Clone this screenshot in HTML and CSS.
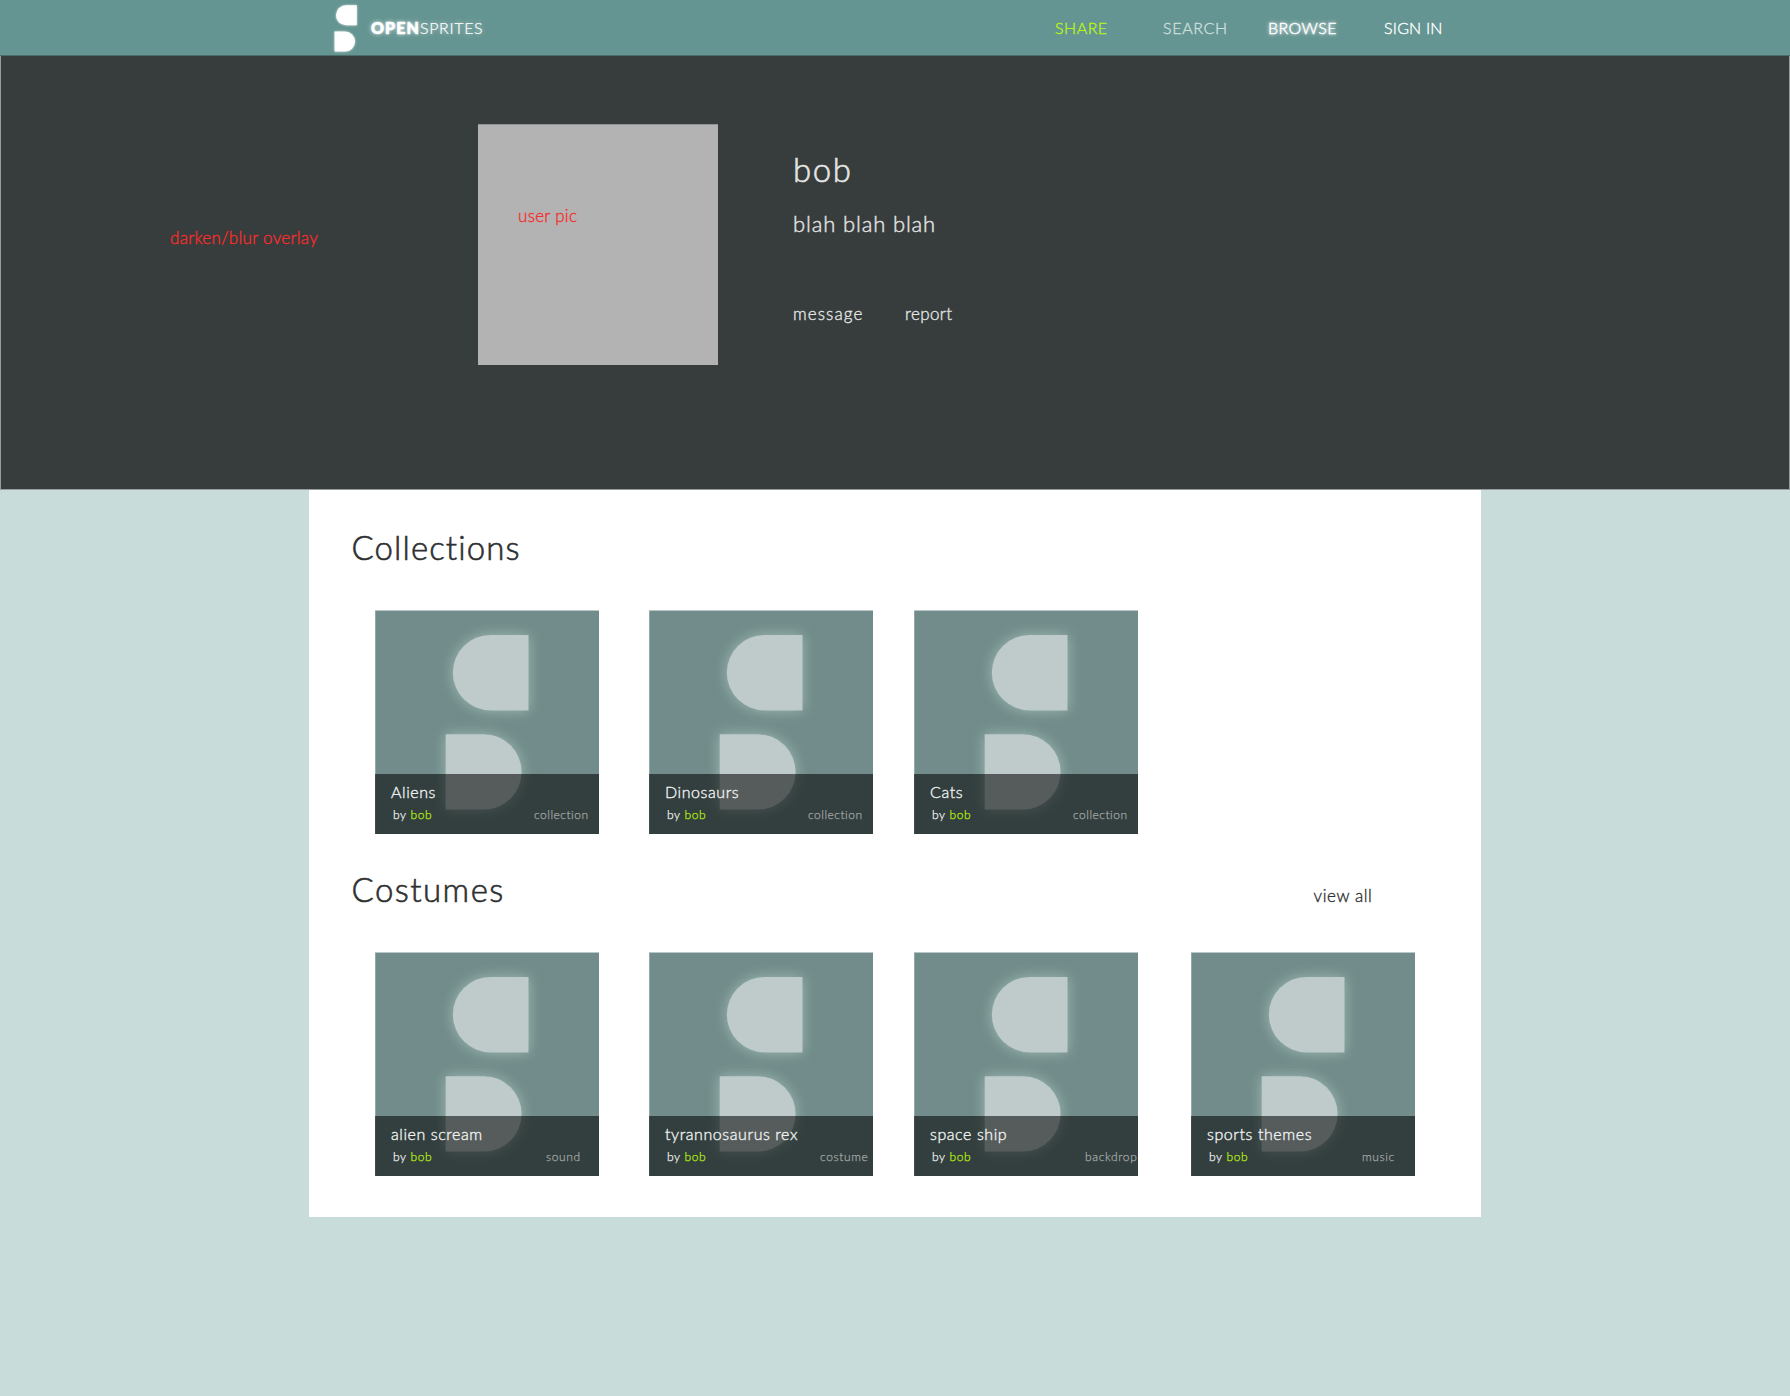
FILE: index.html
```html
<!DOCTYPE html>
<html lang="en">
<head>
<meta charset="utf-8">
<title>OpenSprites - bob</title>
<link rel="stylesheet" href="styles.css">
</head>
<body>
<svg width="0" height="0" class="defs" aria-hidden="true">
  <symbol id="mark" viewBox="0 0 224 224">
    <path d="M153.5 25H115.5a37.7 37.7 0 0 0 0 75.4H153.5z"/>
    <path d="M70.7 124.2H108.9a37.7 37.7 0 0 1 0 75.4H70.7z"/>
  </symbol>
</svg>
<header class="topbar">
  <a class="brand">
    <svg class="brand-mark" viewBox="0 0 24 48"><path d="M22.8 1.2H12a10 10 0 0 0 0 20H22.8z"/><path d="M.6 27.6H11a10 10 0 0 1 0 20H.6z"/></svg>
    <span class="brand-name"><b class="brand-open">OPEN</b>SPRITES</span>
  </a>
  <nav class="nav">
    <a class="nav-share">SHARE</a>
    <a class="nav-search">SEARCH</a>
    <a class="nav-browse">BROWSE</a>
    <a class="nav-signin">SIGN IN</a>
  </nav>
</header>
<section class="hero">
  <p class="note hero-note">darken/blur overlay</p>
  <div class="userpic"><p class="note">user pic</p></div>
  <div class="info">
    <h1 class="name">bob</h1>
    <p class="bio">blah blah blah</p>
    <p class="actions"><a class="message">message</a><a class="report">report</a></p>
  </div>
</section>
<main class="content">
  <div class="section-head"><h2 class="heading">Collections</h2></div>
  <div class="cards collections">
    <article class="card"><svg class="art" viewBox="0 0 224 224"><use href="#mark"/></svg><div class="caption"><h3 class="title">Aliens</h3><div class="meta"><span class="by">by <a class="author">bob</a></span><span class="kind">collection</span></div></div></article>
    <article class="card"><svg class="art" viewBox="0 0 224 224"><use href="#mark"/></svg><div class="caption"><h3 class="title">Dinosaurs</h3><div class="meta"><span class="by">by <a class="author">bob</a></span><span class="kind">collection</span></div></div></article>
    <article class="card"><svg class="art" viewBox="0 0 224 224"><use href="#mark"/></svg><div class="caption"><h3 class="title">Cats</h3><div class="meta"><span class="by">by <a class="author">bob</a></span><span class="kind">collection</span></div></div></article>
  </div>
  <div class="section-head"><h2 class="heading costumes">Costumes</h2><a class="view-all">view all</a></div>
  <div class="cards">
    <article class="card"><svg class="art" viewBox="0 0 224 224"><use href="#mark"/></svg><div class="caption"><h3 class="title">alien scream</h3><div class="meta"><span class="by">by <a class="author">bob</a></span><span class="kind">sound</span></div></div></article>
    <article class="card"><svg class="art" viewBox="0 0 224 224"><use href="#mark"/></svg><div class="caption"><h3 class="title">tyrannosaurus rex</h3><div class="meta"><span class="by">by <a class="author">bob</a></span><span class="kind">costume</span></div></div></article>
    <article class="card"><svg class="art" viewBox="0 0 224 224"><use href="#mark"/></svg><div class="caption"><h3 class="title">space ship</h3><div class="meta"><span class="by">by <a class="author">bob</a></span><span class="kind">backdrop</span></div></div></article>
    <article class="card"><svg class="art" viewBox="0 0 224 224"><use href="#mark"/></svg><div class="caption"><h3 class="title">sports themes</h3><div class="meta"><span class="by">by <a class="author">bob</a></span><span class="kind">music</span></div></div></article>
  </div>
</main>
</body>
</html>
```
FILE: styles.css
```css
* { box-sizing: border-box; margin: 0; padding: 0; }
body {
  min-height: 1396px;
  background: #c8dcda;
  color: #2e3031;
  font: 300 16px/20px Lato, "Open Sans", sans-serif;
  -webkit-text-stroke: .35px currentColor;
  white-space: nowrap;
}
h1, h2, h3 { font-weight: 300; }
.defs { display: block; }

/* Top bar */
.topbar {
  display: flex;
  align-items: center;
  height: 56px;
  padding-left: 334px;
  background: #659592;
  border-bottom: 1px solid #4c6c6a;
  color: #fff;
}
.brand { display: flex; align-items: center; gap: 13px; width: 721px; }
.brand-mark {
  width: 24px;
  height: 48px;
  margin-top: 1px;
  fill: #fff;
  overflow: visible;
  filter: drop-shadow(0 0 1px rgba(255, 255, 255, .8));
}
.brand-name { letter-spacing: .65px; text-shadow: 0 0 4px rgba(255, 255, 255, .7); -webkit-text-stroke-width: .2px; }
.brand-open { font-weight: 900; letter-spacing: 1.1px; -webkit-text-stroke: .7px #fff; text-shadow: 0 0 4px rgba(255, 255, 255, .9); }
.nav { display: grid; grid-template-columns: 108px 105px 116px auto; }
.nav-share { color: #b9f316; letter-spacing: .5px; }
.nav-search { color: #cfdfdd; letter-spacing: .65px; }
.nav-browse { letter-spacing: .4px; text-shadow: 0 0 4px #fff, 0 0 3px rgba(255, 255, 255, .6); -webkit-text-stroke-width: .4px; }
.nav-signin { letter-spacing: .2px; }

/* Profile banner */
.hero {
  display: grid;
  grid-template-columns: 308px 315px auto;
  height: 434px;
  padding: 68px 0 0 169px;
  background: #373c3c;
  border: solid #989c9c;
  border-width: 0 1px 1px;
  color: #e4e5e5;
}
.note { color: #f52e2c; font-size: 17px; letter-spacing: .3px; }
.hero-note { padding-top: 104px; }
.userpic { width: 240px; height: 241px; padding: 81px 0 0 40px; background: #b3b3b3; border-top: 1px solid #939494; }
.info { padding-top: 25px; }
.name { font-size: 33px; line-height: 40px; letter-spacing: 1.6px; -webkit-text-stroke-width: .6px; }
.bio { margin-top: 21px; font-size: 22px; line-height: 28px; letter-spacing: .85px; -webkit-text-stroke-width: .4px; }
.actions { display: grid; grid-template-columns: 112px auto; margin-top: 66px; font-size: 17px; }
.message { letter-spacing: 1.1px; }
.report { letter-spacing: .4px; }

/* Page body */
.content { width: 1172px; height: 727px; margin-left: 309px; padding: 37px 0 0 66px; background: #fff; }
.section-head { display: flex; align-items: flex-end; gap: 811px; margin: 0 0 43px -23.5px; height: 40px; }
.heading { width: 151px; font-size: 33px; line-height: 40px; letter-spacing: 1.1px; -webkit-text-stroke-width: .6px; }
.costumes { letter-spacing: 1.45px; }
.view-all { padding-bottom: 3px; font-size: 17px; letter-spacing: .6px; }
.cards { display: grid; grid-template-columns: 274px 265px 277px 224px; }
.collections { margin-bottom: 35px; }

/* Cards */
.card {
  display: grid;
  width: 224px;
  height: 224px;
  background: #718c8a;
  box-shadow: inset 0 1px #b9c8c6, inset 1px 0 #93a9a7;
}
.art, .caption { grid-area: 1 / 1; }
.art {
  width: 224px;
  height: 224px;
  fill: #becbca;
  filter: drop-shadow(0 0 7px rgba(185, 212, 204, .65));
}
.caption {
  position: relative;
  align-self: end;
  height: 60px;
  padding: 8px 0 0 16px;
  background: rgba(0, 0, 0, .55);
  color: #f0f2f2;
}
.title { font-size: 16px; line-height: 20px; letter-spacing: .58px; }
.meta { display: grid; grid-template-columns: 153px auto; margin: 4px 0 0 2px; font-size: 12px; line-height: 18px; letter-spacing: .65px; -webkit-text-stroke-width: .25px; }
.collections .meta { grid-template-columns: 141px auto; }
.author { color: #b8ec10; }
.kind { color: #a3a8a8; }
.collections .kind { letter-spacing: .5px; }
```
